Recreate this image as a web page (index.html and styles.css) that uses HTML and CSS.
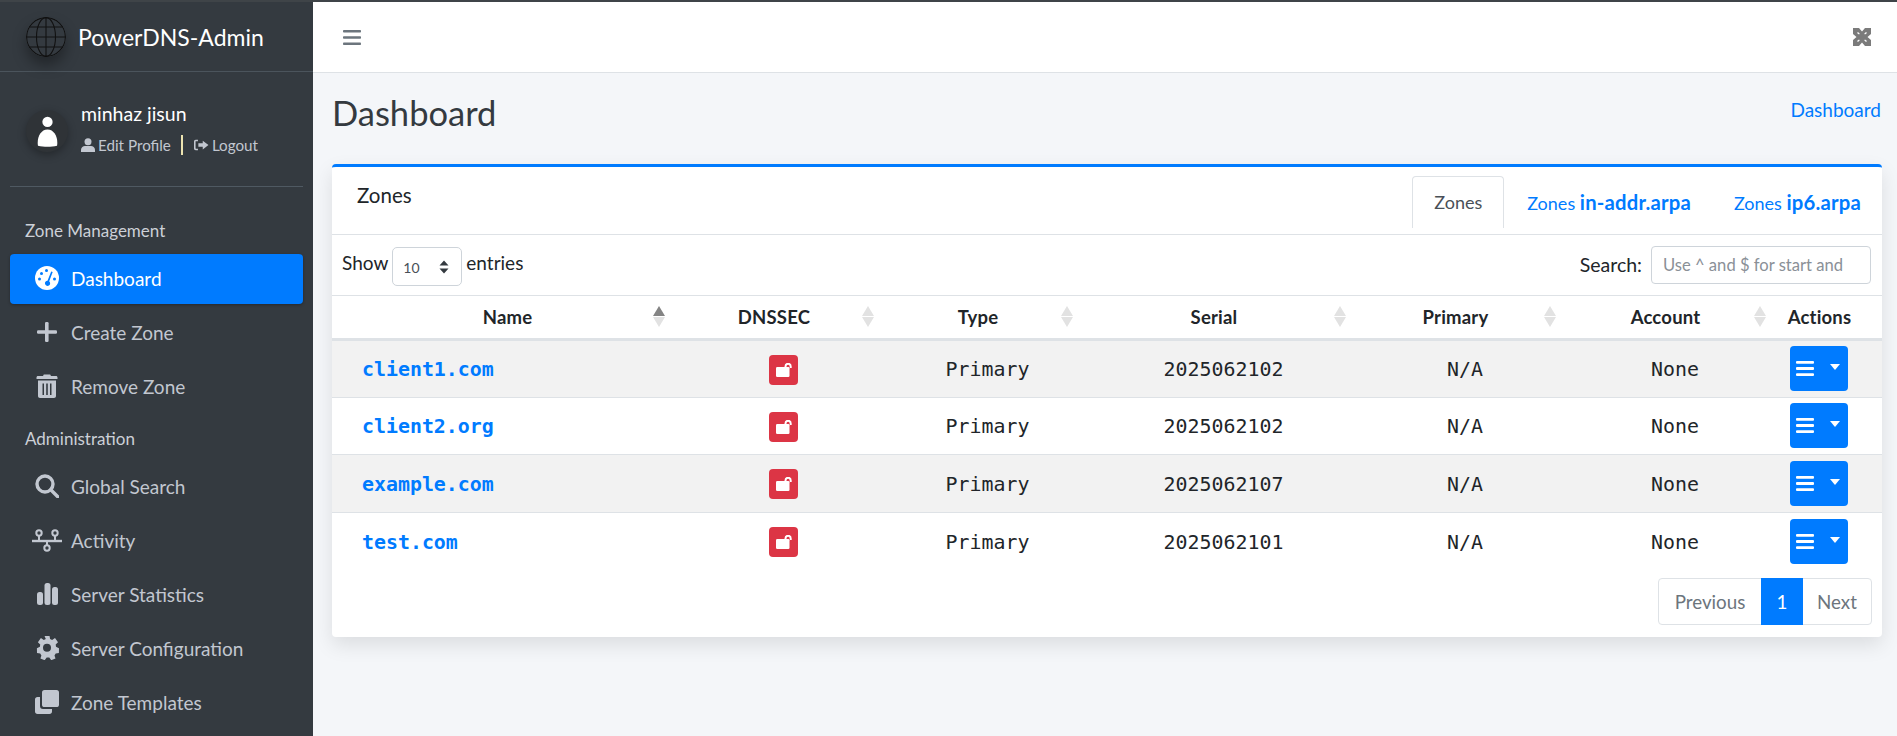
FILE: index.html
```html
<!DOCTYPE html>
<html lang="en">
<head>
<meta charset="utf-8">
<title>PowerDNS-Admin</title>
<link rel="stylesheet" href="styles.css">
</head>
<body>
<div class="app">
  <aside class="sidebar">
    <a class="brand">
      <svg class="logo" viewBox="0 0 40 40" fill="none" stroke="#111" stroke-width="1.1">
        <circle cx="20" cy="20" r="19.4"/>
        <ellipse cx="20" cy="20" rx="9.5" ry="19.4"/>
        <path d="M20 .6v38.8M.6 20h38.8M3.5 10h33M3.5 30h33"/>
      </svg>
      <span class="brand-text">PowerDNS-Admin</span>
    </a>
    <div class="user">
      <div class="avatar">
        <svg viewBox="0 0 22 32" fill="#fff"><circle cx="11" cy="6" r="5.4"/><path d="M1 31c-1.4-8 2.500-17 10-17s11.400 9 10 17c-6 1.400-14 1.400-20 0z"/></svg>
      </div>
      <div class="user-info">
        <div class="user-name">minhaz jisun</div>
        <div class="user-links">
          <span class="user-link">
            <svg class="mini" viewBox="0 0 16 16" fill="currentColor"><circle cx="8" cy="4.200" r="4"/><path d="M0 16v-2.500C0 10.500 2.500 9 4.500 9h7c2 0 4.500 1.500 4.500 4.500V16z"/></svg>Edit Profile</span>
          <span class="sep"></span>
          <span class="user-link">
            <svg class="mini wide" viewBox="0 0 18 16" fill="currentColor"><path d="M5.500 2H3C1.800 2 1 2.800 1 4v8c0 1.200.8 2 2 2h2.500v-1.800H3.300a.5.500 0 0 1-.5-.5V4.300c0-.3.2-.5.5-.5h2.200z"/><path d="M11 3l6.500 5-6.500 5v-3H6V6h5z"/></svg>Logout</span>
        </div>
      </div>
    </div>
    <nav class="nav">
      <div class="nav-head">Zone Management</div>
      <a class="nav-item active">
        <svg class="nav-icon" viewBox="0 0 24 24"><circle cx="12" cy="12" r="12" fill="#fff"/><g fill="#007bff"><circle cx="4.500" cy="13" r="1.500"/><circle cx="6.500" cy="7.500" r="1.500"/><circle cx="11.500" cy="4.500" r="1.500"/><circle cx="19.500" cy="13" r="1.500"/><path d="M16.200 5.500l1.500.5-3.500 9.300a2.600 2.600 0 1 1-1.700-.6z"/></g></svg>
        <span>Dashboard</span></a>
      <a class="nav-item">
        <svg class="nav-icon" viewBox="0 0 24 24" fill="currentColor"><rect x="10" y="2" width="3.600" height="20" rx="1.200"/><rect x="2" y="10.200" width="20" height="3.600" rx="1.200"/></svg>
        <span>Create Zone</span></a>
      <a class="nav-item">
        <svg class="nav-icon" viewBox="0 0 24 24" fill="currentColor"><path d="M1.500 3.500c0-.8.6-1.500 1.500-1.500h5l.8-1.500h6.400L16 2h5c.9 0 1.500.7 1.500 1.500V5h-21z"/><path fill-rule="evenodd" d="M3 6.500h18V22c0 1.200-.8 2-2 2H5c-1.200 0-2-.8-2-2zM7.500 9.500v11.500h1.500V9.500zm3.700 0v11.500h1.600V9.500zm3.800 0v11.500h1.500V9.500z"/></svg>
        <span>Remove Zone</span></a>
      <div class="nav-head second">Administration</div>
      <a class="nav-item">
        <svg class="nav-icon" viewBox="0 0 24 24" fill="none" stroke="currentColor" stroke-width="3.400"><circle cx="10" cy="10" r="8"/><path d="M15.800 15.800l7 7" stroke-linecap="round"/></svg>
        <span>Global Search</span></a>
      <a class="nav-item">
        <svg class="nav-icon big" viewBox="0 0 30 24" fill="none" stroke="currentColor" stroke-width="2"><path d="M0 13h30" stroke-width="2.400"/><circle cx="7" cy="5" r="2.700"/><circle cx="23" cy="5" r="2.700"/><circle cx="15" cy="20" r="2.700"/><path d="M7 8v5M23 8v5M15 13v4"/></svg>
        <span>Activity</span></a>
      <a class="nav-item">
        <svg class="nav-icon" viewBox="0 0 24 24" fill="currentColor"><rect x="2" y="10" width="6" height="13" rx="2.500"/><rect x="9.500" y="1" width="6" height="22" rx="2.500"/><rect x="17" y="5" width="6" height="18" rx="2.500"/></svg>
        <span>Server Statistics</span></a>
      <a class="nav-item">
        <svg class="nav-icon" viewBox="0 0 24 24" fill="currentColor"><path fill-rule="evenodd" d="M9.500 0h5l.6 3.300 2 .9L20 2.300l3 4.100-2.300 2.400.3 2.200 3 1.500-.1 4.600-3.200.7-1.200 1.900 1 3.100-4.300 1.600-1.900-2.600h-2.600L9.700 24.400l-4.300-1.600 1-3.100-1.200-1.900L2 17.100l-.1-4.600 3-1.500.3-2.200L2.900 6.400l3-4.100 2.900 1.900 2-.9zM12 8a4 4 0 1 0 0 8 4 4 0 0 0 0-8z" transform="translate(0 -.200)"/></svg>
        <span>Server Configuration</span></a>
      <a class="nav-item">
        <svg class="nav-icon" viewBox="0 0 24 24" fill="currentColor"><rect x="7" y="0" width="17" height="17" rx="2.600"/><path d="M5 7H2.500C1 7 0 8 0 9.500v12C0 23 1 24 2.500 24h12c1.500 0 2.500-1 2.500-2.500V19H8c-2 0-3-1-3-3z"/></svg>
        <span>Zone Templates</span></a>
    </nav>
  </aside>
  <main class="main">
    <header class="topbar">
      <svg class="bars" viewBox="0 0 18 15" fill="currentColor"><rect width="18" height="2.600" rx=".8"/><rect y="6.200" width="18" height="2.600" rx=".8"/><rect y="12.400" width="18" height="2.600" rx=".8"/></svg>
      <svg class="expand" viewBox="0 0 18 18"><rect width="18" height="18" fill="#7b7b7b"/><path fill="#fff" d="M6 0h6L9 3.500zM6 18h6L9 14.500zM0 6v6L3.500 9zM18 6v6L14.500 9z"/><path fill="#fff" d="M6 6.500l.8-.8-1.800-1.800-1 1zM12 6.500l-.8-.8 1.800-1.800 1 1zM6 11.500l.8.8-1.800 1.800-1-1zM12 11.500l-.8.8 1.800 1.800 1-1z"/></svg>
    </header>
    <div class="page-head">
      <h1 class="title">Dashboard</h1>
      <a class="crumb">Dashboard</a>
    </div>
    <section class="card">
      <div class="card-head">
        <h3 class="card-title">Zones</h3>
        <ul class="tabs">
          <li class="tab current">Zones</li>
          <li class="tab">Zones <b>in-addr.arpa</b></li>
          <li class="tab">Zones <b>ip6.arpa</b></li>
        </ul>
      </div>
      <div class="filters">
        <div class="length">Show
          <div class="select"><span>10</span>
            <svg viewBox="0 0 10 14" fill="#343a40"><path d="M5 .5L9.500 5.500H.5zM5 13.500L.5 8.500h9z"/></svg>
          </div> entries</div>
        <label class="search">Search:
          <input class="search-input" type="text" placeholder="Use ^ and $ for start and end">
        </label>
      </div>
      <table class="zones">
        <colgroup>
          <col class="c-name"><col class="c-sec"><col class="c-type"><col class="c-serial"><col class="c-prim"><col class="c-acct"><col class="c-act">
        </colgroup>
        <thead>
          <tr>
            <th class="sortable asc th-name">Name<i class="sort"></i></th>
            <th class="sortable">DNSSEC<i class="sort"></i></th>
            <th class="sortable">Type<i class="sort"></i></th>
            <th class="sortable">Serial<i class="sort"></i></th>
            <th class="sortable">Primary<i class="sort"></i></th>
            <th class="sortable">Account<i class="sort"></i></th>
            <th class="th-act">Actions</th>
          </tr>
        </thead>
        <tbody>
          <tr>
            <td class="td-name"><a>client1.com</a></td>
            <td><span class="lock"><svg viewBox="0 0 16 14" fill="#fff"><rect x="0" y="4" width="13.500" height="10" rx="1.200"/><path d="M9.500 4.500V3.400a2.600 2.600 0 0 1 5.200 0V5" fill="none" stroke="#fff" stroke-width="2"/></svg></span></td>
            <td>Primary</td><td>2025062102</td><td>N/A</td><td>None</td>
            <td class="td-act"><span class="menu-btn"><svg viewBox="0 0 18 15" fill="#fff"><rect width="18" height="2.800" rx="1"/><rect y="6.100" width="18" height="2.800" rx="1"/><rect y="12.200" width="18" height="2.800" rx="1"/></svg><i class="caret"></i></span></td>
          </tr>
          <tr>
            <td class="td-name"><a>client2.org</a></td>
            <td><span class="lock"><svg viewBox="0 0 16 14" fill="#fff"><rect x="0" y="4" width="13.500" height="10" rx="1.200"/><path d="M9.500 4.500V3.400a2.600 2.600 0 0 1 5.200 0V5" fill="none" stroke="#fff" stroke-width="2"/></svg></span></td>
            <td>Primary</td><td>2025062102</td><td>N/A</td><td>None</td>
            <td class="td-act"><span class="menu-btn"><svg viewBox="0 0 18 15" fill="#fff"><rect width="18" height="2.800" rx="1"/><rect y="6.100" width="18" height="2.800" rx="1"/><rect y="12.200" width="18" height="2.800" rx="1"/></svg><i class="caret"></i></span></td>
          </tr>
          <tr>
            <td class="td-name"><a>example.com</a></td>
            <td><span class="lock"><svg viewBox="0 0 16 14" fill="#fff"><rect x="0" y="4" width="13.500" height="10" rx="1.200"/><path d="M9.500 4.500V3.400a2.600 2.600 0 0 1 5.200 0V5" fill="none" stroke="#fff" stroke-width="2"/></svg></span></td>
            <td>Primary</td><td>2025062107</td><td>N/A</td><td>None</td>
            <td class="td-act"><span class="menu-btn"><svg viewBox="0 0 18 15" fill="#fff"><rect width="18" height="2.800" rx="1"/><rect y="6.100" width="18" height="2.800" rx="1"/><rect y="12.200" width="18" height="2.800" rx="1"/></svg><i class="caret"></i></span></td>
          </tr>
          <tr>
            <td class="td-name"><a>test.com</a></td>
            <td><span class="lock"><svg viewBox="0 0 16 14" fill="#fff"><rect x="0" y="4" width="13.500" height="10" rx="1.200"/><path d="M9.500 4.500V3.400a2.600 2.600 0 0 1 5.200 0V5" fill="none" stroke="#fff" stroke-width="2"/></svg></span></td>
            <td>Primary</td><td>2025062101</td><td>N/A</td><td>None</td>
            <td class="td-act"><span class="menu-btn"><svg viewBox="0 0 18 15" fill="#fff"><rect width="18" height="2.800" rx="1"/><rect y="6.100" width="18" height="2.800" rx="1"/><rect y="12.200" width="18" height="2.800" rx="1"/></svg><i class="caret"></i></span></td>
          </tr>
        </tbody>
      </table>
      <div class="pager">
        <div class="pages">
          <span class="page prev">Previous</span><span class="page on">1</span><span class="page next">Next</span>
        </div>
      </div>
    </section>
  </main>
</div>
</body>
</html>
```
FILE: styles.css
```css
* { box-sizing: border-box; }
html, body { margin: 0; height: 736px; overflow: hidden; }
body { font-family: Lato, "Noto Sans", sans-serif; font-size: 17.5px; color: #212529; background: #f4f6f9; }
.app { display: flex; height: 736px; border-top: 2px solid #3f4448; }

.sidebar { width: 313px; flex: none; background: #343a40; color: #c2c7d0; }
.brand { display: flex; align-items: center; height: 70px; padding-left: 26px; border-bottom: 1px solid #4b545c; color: #fff; }
.logo { width: 40px; height: 40px; border-radius: 50%; box-shadow: 0 8px 14px rgba(0,0,0,.35); }
.brand-text { margin-left: 12px; font-size: 23px; }
.user { display: flex; align-items: center; height: 115px; margin: 0 10px; padding-left: 16px; padding-top: 2px; border-bottom: 1px solid #4f5962; }
.avatar { display: flex; align-items: center; justify-content: center; width: 42px; height: 42px; margin-top: 2px; border-radius: 50%; background: #2f3337; box-shadow: 0 3px 8px rgba(0,0,0,.3); }
.avatar svg { width: 21px; height: 31px; }
.user-info { margin-left: 13px; margin-top: -5px; }
.user-name { font-size: 19.500px; color: #fff; line-height: 26px; margin-bottom: 8px; }
.user-links { display: flex; align-items: center; font-size: 15.200px; line-height: 20px; }
.user-link { display: flex; align-items: center; }
.mini { width: 14px; height: 14px; margin-right: 3px; }
.mini.wide { width: 16px; }
.sep { width: 2px; height: 20px; background: #ece3b0; margin: 0 10px; }

.nav { padding: 0 10px; }
.nav-head { font-size: 17px; color: #ccd0d7; height: 67px; padding: 32px 0 0 15px; line-height: 24px; }
.nav-head.second { height: 46px; padding-top: 11px; padding-bottom: 0; }
.nav-item { display: flex; align-items: center; height: 50px; margin-bottom: 4px; padding-bottom: 2px; border-radius: 4px; padding-left: 25px; font-size: 19px; }
.nav-item.active { background: #007bff; color: #fff; box-shadow: 0 1px 3px rgba(0,0,0,.3); }
.nav-icon { width: 24px; height: 24px; flex: none; margin-right: 12px; }
.nav-icon.big { width: 30px; margin-left: -3px; margin-right: 9px; }

.main { flex: 1; min-width: 0; }
.topbar { display: flex; align-items: center; justify-content: space-between; height: 71px; padding: 0 26px 0 30px; background: #fff; border-bottom: 1px solid #dee2e6; }
.bars { width: 18px; height: 15px; color: #6c757d; }
.expand { width: 18px; height: 18px; }
.page-head { display: flex; justify-content: space-between; padding: 0 16px 0 19px; height: 91px; }
.title { margin: 20px 0 0; font-size: 34.500px; font-weight: 400; line-height: 40px; color: #343a40; }
.crumb { margin-top: 24px; font-size: 19px; line-height: 26px; color: #007bff; }

.card { height: 473px; margin: 0 15px 0 19px; background: #fff; border-top: 3px solid #007bff; border-radius: 4px; box-shadow: 0 8px 20px rgba(0,0,0,.1); }
.card-head { display: flex; justify-content: space-between; height: 68px; border-bottom: 1px solid #dee2e6; }
.card-title { margin: 14px 0 0 25px; font-size: 20.500px; font-weight: 400; line-height: 28px; }
.tabs { display: flex; list-style: none; margin: 9px 0 0 0; padding: 0; }
.tab { height: 52px; padding: 0 20px; line-height: 51px; font-size: 18px; color: #007bff; border: 1px solid transparent; border-bottom: 0; border-radius: 4px 4px 0 0; margin-left: 1px; white-space: pre; }
.tab b { font-size: 20.300px; letter-spacing: .2px; }
.tab.current { color: #495057; border-color: #dee2e6; margin-right: 1px; padding: 0 21px; }

.filters { display: flex; justify-content: space-between; align-items: center; height: 60px; padding: 0 11px 0 10px; }
.length { display: flex; align-items: center; gap: 4px; margin-top: -6px; font-size: 19px; }
.select { display: flex; align-items: center; justify-content: space-between; width: 70px; height: 39px; padding: 2px 12px 0 10px; margin-top: 8px; border: 1px solid #ced4da; border-radius: 5px; font-size: 14px; color: #495057; }
.select svg { width: 10px; height: 14px; }
.search { display: flex; align-items: center; gap: 9px; margin-top: -1px; font-size: 19.500px; }
.search-input { width: 220px; height: 38px; margin-top: 1px; padding: 0 25px 0 11px; border: 1px solid #ced4da; border-radius: 4px; font: inherit; font-size: 16.600px; }
.search-input::placeholder { color: #8a9097; }

.zones { width: 100%; table-layout: fixed; border-collapse: collapse; border-top: 1px solid #dee2e6; }
.c-name { width: 339px; } .c-sec { width: 209px; } .c-type { width: 199px; } .c-serial { width: 273px; }
.c-prim { width: 210px; } .c-acct { width: 210px; } .c-act { width: 110px; }
th { position: relative; height: 44px; padding: 0 3px 0 0; font-size: 18.500px; font-weight: 700; text-align: center; border-bottom: 3px solid #dee2e6; letter-spacing: .2px; }
.th-name { padding: 0 0 0 12px; }
.th-act { padding-right: 15px; }
.sort { position: absolute; right: 5px; top: 10px; width: 13px; height: 21px; }
.sort::before, .sort::after { content: ""; position: absolute; left: 0; border-left: 6.500px solid transparent; border-right: 6.500px solid transparent; }
.sort::before { top: 0; border-bottom: 10.500px solid #e2e2e2; }
.sort::after { bottom: 0; border-top: 10.500px solid #e2e2e2; }
.asc .sort::before { border-bottom-color: #848484; }
td { height: 57.500px; padding: 2px 0 0 16px; text-align: center; font-family: "DejaVu Sans Mono", "Liberation Mono", monospace; font-size: 19.900px; border-bottom: 1px solid #dee2e6; }
tbody tr:nth-child(odd) { background: #f2f2f2; }
tbody tr:last-child td { border-bottom: 0; }
.td-name { padding-left: 30px; text-align: left; font-weight: 700; color: #007bff; }
.td-act { padding: 0 17px 0 0; }
.lock { display: inline-flex; align-items: center; justify-content: center; width: 29px; height: 30px; background: #dc3545; border-radius: 4px; vertical-align: middle; }
.lock svg { width: 16px; height: 14px; }
.menu-btn { display: inline-flex; align-items: center; width: 58px; height: 45px; padding-left: 6px; background: #007bff; border-radius: 4px; vertical-align: middle; }
.menu-btn svg { width: 18px; height: 15px; }
.caret { margin-left: 16px; margin-top: -3px; border-left: 5.500px solid transparent; border-right: 5.500px solid transparent; border-top: 6px solid #fff; }

.pager { display: flex; justify-content: flex-end; padding: 8px 10px 0 0; }
.pages { display: flex; height: 47px; border: 1px solid #dee2e6; border-radius: 4px; font-size: 18.800px; }
.page { display: flex; align-items: center; justify-content: center; color: #6c757d; }
.prev { width: 102px; }
.on { width: 42px; height: 47px; margin-top: -1px; background: #007bff; color: #fff; }
.next { width: 68px; }
```
